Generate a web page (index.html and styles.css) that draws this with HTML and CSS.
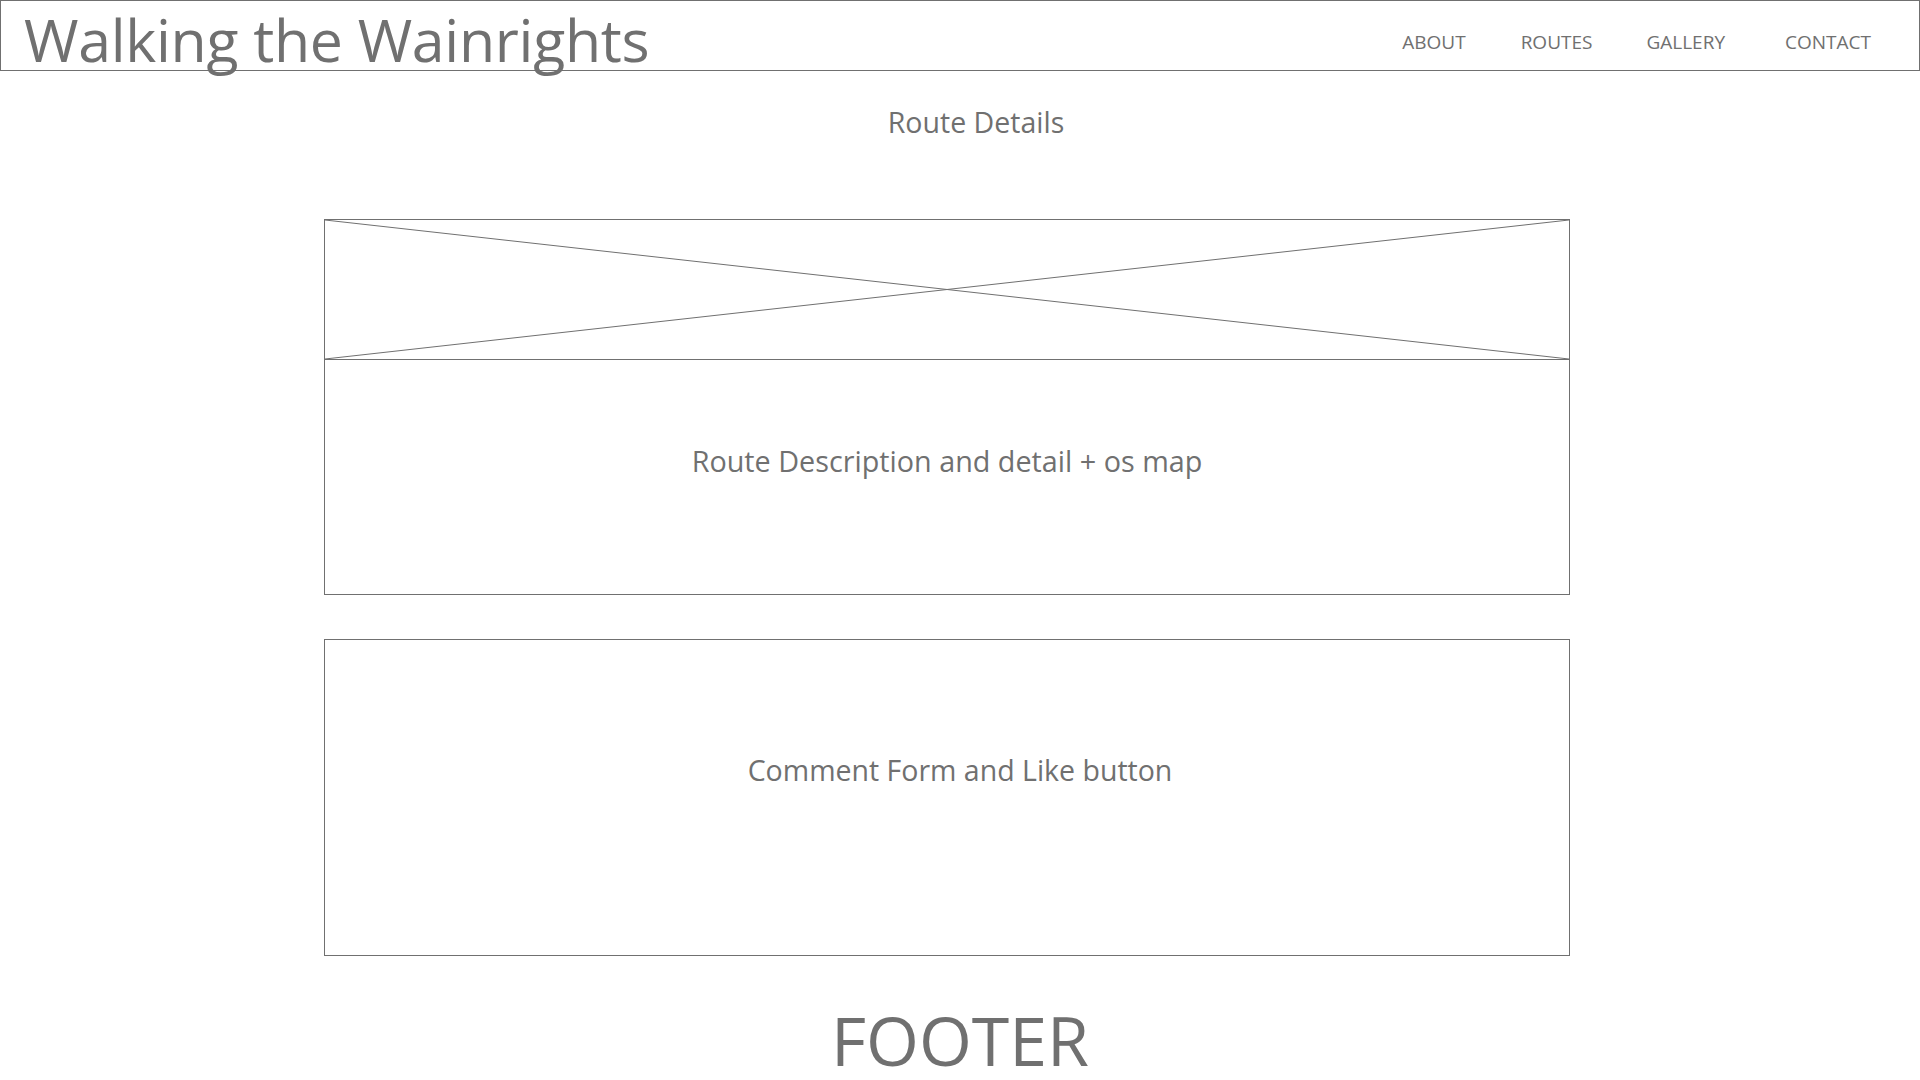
FILE: index.html
```html
<!DOCTYPE html>
<html lang="en">
<head>
<meta charset="utf-8">
<title>Walking the Wainrights</title>
<link rel="stylesheet" href="styles.css">
</head>
<body>
<header class="site-header">
  <h1 class="site-title">Walking the Wainrights</h1>
  <nav class="site-nav">
    <a class="nav-link nav-about" href="#">ABOUT</a>
    <a class="nav-link nav-routes" href="#">ROUTES</a>
    <a class="nav-link nav-gallery" href="#">GALLERY</a>
    <a class="nav-link nav-contact" href="#">CONTACT</a>
  </nav>
</header>
<main class="page">
  <h2 class="page-heading">Route Details</h2>
  <section class="route-card">
    <div class="image-placeholder">
      <svg class="cross" viewBox="0 0 100 100" preserveAspectRatio="none">
        <line x1="0" y1="0" x2="100" y2="100" vector-effect="non-scaling-stroke"/>
        <line x1="0" y1="100" x2="100" y2="0" vector-effect="non-scaling-stroke"/>
      </svg>
    </div>
    <div class="route-desc">Route Description and detail + os map</div>
  </section>
  <section class="comment-box">
    <div class="comment-text">Comment Form and Like button</div>
  </section>
</main>
<footer class="site-footer">FOOTER</footer>
</body>
</html>
```

FILE: styles.css
```css
html, body {
  margin: 0;
  padding: 0;
  background: #ffffff;
}
body {
  font-family: "Open Sans", "Noto Sans", sans-serif;
  color: #707070;
  width: 1920px;
  height: 1080px;
  overflow: hidden;
}
.site-header {
  box-sizing: border-box;
  height: 71px;
  border: 1px solid #707070;
  display: flex;
  justify-content: space-between;
  align-items: flex-start;
}
.site-title {
  margin: 0 0 0 23px;
  font-weight: 400;
  font-size: 59px;
  line-height: 76px;
  height: 69px;
  letter-spacing: -0.3px;
  white-space: nowrap;
}
.site-nav {
  display: flex;
  margin: 28px 48px 0 0;
}
.nav-link {
  color: #707070;
  text-decoration: none;
  font-size: 19px;
  line-height: 26px;
}
.nav-about { margin-right: 55px; }
.nav-routes { margin-right: 54px; }
.nav-gallery { margin-right: 60px; }
.page {
  display: flex;
  flex-direction: column;
}
.page-heading {
  margin: 31px 0 0 0;
  padding-left: 32px;
  text-align: center;
  font-weight: 400;
  font-size: 28.5px;
  line-height: 40px;
}
.route-card {
  box-sizing: border-box;
  width: 1246px;
  margin: 77px 0 0 324px;
  border: 1px solid #707070;
}
.image-placeholder {
  height: 139px;
  border-bottom: 1px solid #707070;
  position: relative;
}
.cross {
  position: absolute;
  inset: 0;
  width: 100%;
  height: 100%;
}
.cross line {
  stroke: #707070;
  stroke-width: 1;
}
.route-desc {
  height: 234px;
  box-sizing: border-box;
  padding-top: 83px;
  text-align: center;
  font-size: 28.75px;
  line-height: 36px;
}
.comment-box {
  box-sizing: border-box;
  width: 1246px;
  height: 317px;
  margin: 44px 0 0 324px;
  border: 1px solid #707070;
}
.comment-text {
  padding-top: 112px;
  padding-left: 26px;
  text-align: center;
  font-size: 28.5px;
  line-height: 36px;
}
.site-footer {
  margin-top: 50px;
  text-align: center;
  font-size: 68px;
  line-height: 68px;
}
```
